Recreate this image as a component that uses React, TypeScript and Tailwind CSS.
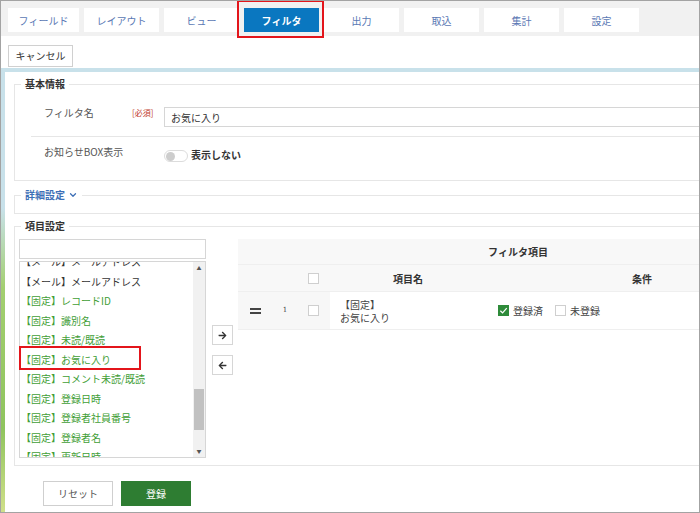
import { FaArrowRight, FaArrowLeft } from "react-icons/fa";
import { ChevronDown } from "lucide-react";

const tabs = ["フィールド", "レイアウト", "ビュー", "フィルタ", "出力", "取込", "集計", "設定"];

const items: { t: string; g: boolean }[] = [
  { t: "【メール】メールアドレス", g: false },
  { t: "【メール】メールアドレス", g: false },
  { t: "【固定】レコードID", g: true },
  { t: "【固定】識別名", g: true },
  { t: "【固定】未読/既読", g: true },
  { t: "【固定】お気に入り", g: true },
  { t: "【固定】コメント未読/既読", g: true },
  { t: "【固定】登録日時", g: true },
  { t: "【固定】登録者社員番号", g: true },
  { t: "【固定】登録者名", g: true },
  { t: "【固定】更新日時", g: true },
];

function Box() {
  return <div className="w-[11px] h-[11px] border border-[#cfcfcf] bg-white shrink-0" />;
}

export default function App() {
  return (
    <div className="w-[700px] h-[513px] border border-[#a3a3a3] bg-white overflow-hidden flex flex-col font-['Noto_Sans_CJK_JP',sans-serif] text-[#333]">
      {/* tab bar */}
      <div className="h-[35px] shrink-0 bg-[#f1f1f1] flex gap-[5px] pl-[7px] pt-[7px]">
        {tabs.map((t, i) => {
          const active = i === 3;
          return (
            <div
              key={t}
              className={
                (i === 0 ? "w-[71px] " : "w-[75px] ") +
                (active
                  ? "relative bg-[#0a77c0] text-white font-bold "
                  : "bg-white text-[#5a78b4] ") +
                "h-[24px] flex items-center justify-center text-[10px]"
              }
            >
              {t}
              {active && (
                <div className="absolute left-[-7px] right-[-5px] top-[-8px] bottom-[-6px] border-2 border-[#e3151b]" />
              )}
            </div>
          );
        })}
      </div>

      {/* cancel row */}
      <div className="h-[32px] shrink-0 bg-white pl-[7px] pt-[5px]">
        <button className="w-[65px] h-[22px] border border-[#d0d0d0] bg-white text-[10px] text-[#333]">キャンセル</button>
      </div>

      {/* background area */}
      <div className="flex-1 pl-[4px] pt-[4px] bg-[linear-gradient(180deg,#c8e1ea_0px,#c8e1ea_140px,#a3cf70_220px,#8fc45e_360px,#d0e08a_444px)] flex">
        <div className="flex-1 bg-white overflow-hidden pt-[5px]">
          {/* 基本情報 */}
          <fieldset className="ml-[9px] w-[700px] border border-[#e6e6e6]">
            <legend className="ml-[6px] px-[4px] text-[10px] font-bold leading-[14px] text-[#333]">基本情報</legend>
            <div className="ml-[16px] border-b border-[#e6e6e6] flex items-start pt-[16px] pb-[9px]">
              <div className="pl-[13px] w-[101px] text-[10px] leading-[12px] text-[#555]">フィルタ名</div>
              <div className="w-[32px] text-[8px] leading-[12px] text-[#c0392b]">[必須]</div>
              <div className="flex-1 h-[20px] border border-[#d6d6d6] flex items-center pl-[6px] text-[10px] text-[#333]">お気に入り</div>
            </div>
            <div className="ml-[16px] h-[43px] flex items-start pt-[9px]">
              <div className="pl-[13px] w-[133px] text-[10px] leading-[12px] text-[#555]">お知らせBOX表示</div>
              <div className="mt-[4px] w-[24px] h-[12px] rounded-full border border-[#dcdcdc] bg-white flex items-center pl-[1px]">
                <div className="w-[9px] h-[9px] rounded-full bg-[#cdcdcd]" />
              </div>
              <div className="ml-[3px] mt-[3px] text-[10px] leading-[12px] font-bold text-[#333]">表示しない</div>
            </div>
          </fieldset>

          {/* 詳細設定 */}
          <fieldset className="mt-[7px] ml-[9px] w-[700px] border border-[#e6e6e6]">
            <legend className="ml-[6px] px-[4px] text-[10px] font-bold leading-[14px] text-[#3d6fb6]">
              <span className="inline-flex items-center gap-[3px]">
                詳細設定
                <ChevronDown size={10} strokeWidth={3} />
              </span>
            </legend>
            <div className="h-[11px]" />
          </fieldset>

          {/* 項目設定 */}
          <fieldset className="mt-[5px] ml-[9px] w-[700px] border border-[#e6e6e6]">
            <legend className="ml-[6px] px-[4px] text-[10px] font-bold leading-[14px] text-[#333]">項目設定</legend>
            <div className="flex items-start pt-[6px] pb-[7px] pl-[4px]">
              {/* left list */}
              <div className="relative w-[187px]">
                <div className="h-[20px] border border-[#d6d6d6] bg-white" />
                <div className="mt-[2px] h-[197px] border border-[#d6d6d6] flex overflow-hidden">
                  <div className="flex-1 overflow-hidden">
                    <div className="mt-[-10px]">
                      {items.map((it, i) => (
                        <div
                          key={i}
                          className={
                            (it.g ? "text-[#3f9e36] " : "text-[#333] ") +
                            "h-[19.5px] leading-[19.5px] text-[10px] whitespace-nowrap pl-[1px]"
                          }
                        >
                          {it.t}
                        </div>
                      ))}
                    </div>
                  </div>
                  <div className="w-[12px] bg-[#f1f1f1] flex flex-col items-stretch">
                    <div className="h-[12px] flex items-center justify-center text-[5px] text-[#555]">▲</div>
                    <div className="h-[115px]" />
                    <div className="h-[41px] mx-[1px] bg-[#c1c1c1]" />
                    <div className="flex-1" />
                    <div className="h-[12px] flex items-center justify-center text-[5px] text-[#555]">▼</div>
                  </div>
                </div>
                <div className="absolute left-0 top-[107px] w-[122px] h-[24px] border-2 border-[#e3151b]" />
              </div>

              {/* arrow buttons */}
              <div className="ml-[6px] w-[21px] flex flex-col">
                <button className="mt-[86px] w-[21px] h-[20px] border border-[#d6d6d6] bg-white flex items-center justify-center text-[#333]">
                  <FaArrowRight size={9} />
                </button>
                <button className="mt-[10px] w-[21px] h-[20px] border border-[#d6d6d6] bg-white flex items-center justify-center text-[#333]">
                  <FaArrowLeft size={9} />
                </button>
              </div>

              {/* table */}
              <div className="ml-[5px] w-[560px] shrink-0">
                <div className="h-[26px] bg-[#f8f8f8] border-b border-[#efefef] flex items-center justify-center text-[10px] font-bold text-[#333]">
                  フィルタ項目
                </div>
                <div className="h-[27px] bg-[#f8f8f8] border-b border-[#efefef] flex items-center text-[10px] font-bold text-[#333]">
                  <div className="w-[34px]" />
                  <div className="w-[26px]" />
                  <div className="w-[32px] pl-[10px]"><Box /></div>
                  <div className="w-[156px] text-center">項目名</div>
                  <div className="flex-1 text-center">条件</div>
                </div>
                <div className="h-[38px] border-b border-[#efefef] flex items-stretch text-[10px]">
                  <div className="w-[92px] bg-[#f7f7f7] flex items-center">
                    <div className="w-[34px] flex justify-center">
                      <div className="flex flex-col gap-[2px]">
                        <div className="w-[11px] h-[2px] bg-[#444]" />
                        <div className="w-[11px] h-[2px] bg-[#444]" />
                      </div>
                    </div>
                    <div className="w-[26px] text-center text-[7px] font-['DejaVu_Serif',serif] text-[#444]">1</div>
                    <div className="w-[32px] pl-[10px]"><Box /></div>
                  </div>
                  <div className="w-[156px] bg-white flex flex-col justify-center pl-[10px] text-[#444]">
                    <div className="leading-[13px]">【固定】</div>
                    <div className="leading-[13px]">お気に入り</div>
                  </div>
                  <div className="flex-1 bg-white flex items-center pl-[12px] text-[#444]">
                    <div className="w-[11px] h-[11px] bg-[#2e8b3a] flex items-center justify-center">
                      <svg width="9" height="9" viewBox="0 0 10 10">
                        <path d="M1.5 5.2 L4 7.6 L8.6 2.4" stroke="white" strokeWidth="1.4" fill="none" />
                      </svg>
                    </div>
                    <span className="ml-[4px]">登録済</span>
                    <div className="ml-[12px]"><Box /></div>
                    <span className="ml-[4px]">未登録</span>
                  </div>
                </div>
              </div>
            </div>
          </fieldset>

          {/* bottom buttons */}
          <div className="mt-[15px] ml-[38px] flex gap-[8px]">
            <button className="w-[70px] h-[25px] border border-[#cfcfcf] bg-white text-[10px] text-[#555]">リセット</button>
            <button className="w-[70px] h-[25px] bg-[#2e7d32] text-[10px] text-white">登録</button>
          </div>
        </div>
      </div>
    </div>
  );
}
